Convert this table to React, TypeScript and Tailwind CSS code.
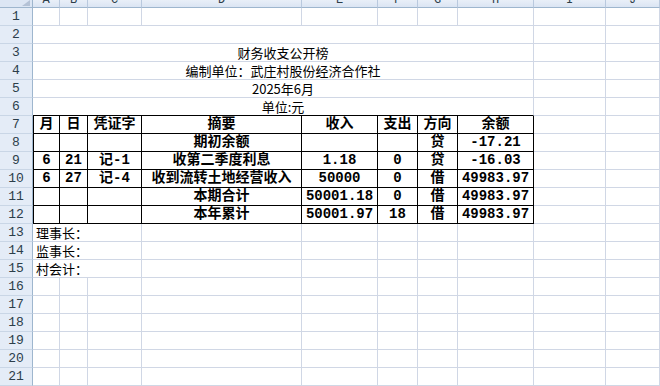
const cols = ["A", "B", "C", "D", "E", "F", "G", "H", "I", "J"];

const table = [
    ["月", "日", "凭证字", "摘要", "收入", "支出", "方向", "余额"],
    ["", "", "", "期初余额", "", "", "贷", "-17.21"],
    ["6", "21", "记-1", "收第二季度利息", "1.18", "0", "贷", "-16.03"],
    ["6", "27", "记-4", "收到流转土地经营收入", "50000", "0", "借", "49983.97"],
    ["", "", "", "本期合计", "50001.18", "0", "借", "49983.97"],
    ["", "", "", "本年累计", "50001.97", "18", "借", "49983.97"],
];

const titles: Record<number, string> = {
    2: "",
    3: "财务收支公开榜",
    4: "编制单位：武庄村股份经济合作社",
    5: "2025年6月",
    6: "单位:元",
};

const signers: Record<number, string> = {
    13: "理事长：",
    14: "监事长：",
    15: "村会计：",
};

const RowHead = ({ n }: { n: number }) => (
    <div className="h-[18px] flex items-center justify-center bg-[#e4ecf7] border-r border-r-[#9eb6ce] border-b border-b-[#c9d6e6] text-[13px] text-[#2c3e4a] font-['Liberation_Mono',monospace]">
        {n}
    </div>
);

const Empty = () => <div className="h-[18px] border-r border-b border-[#d0d7e5]" />;

const App = () => {
    const rows = Array.from({ length: 21 }, (_, i) => i + 1);
    return (
        <div className="w-[660px] h-[386px] overflow-hidden bg-white font-['Noto_Sans_CJK_SC',sans-serif] text-black">
            <div className="grid grid-cols-[33px_27px_28px_54px_160px_76px_40px_40px_76px_72px_1fr]">
                {/* column header strip, scrolled so only its lower part shows */}
                <div className="relative h-[8px] bg-[#dce6f4] border-r border-r-[#9eb6ce] border-b border-b-[#9eb6ce]">
                    <svg className="absolute right-[2px] top-0" width="10" height="6" viewBox="0 0 10 6">
                        <polygon points="10,0 10,6 2,6" fill="#b4c2d6" />
                    </svg>
                </div>
                {cols.map((c) => (
                    <div key={c} className="h-[8px] overflow-hidden flex items-end justify-center bg-gradient-to-b from-[#e9eff8] to-[#dbe5f3] border-r border-r-[#b9c9de] border-b border-b-[#9eb6ce]">
                        <span className="leading-[14px] text-[12px] text-[#2c3e4a] font-['Liberation_Mono',monospace]">{c}</span>
                    </div>
                ))}

                {rows.map((n) => {
                    const cells = [];
                    if (n >= 2 && n <= 6) {
                        cells.push(
                            <div
                                key="m"
                                className={
                                    n === 6
                                        ? "col-span-8 h-[18px] flex items-center justify-center text-[13px] border-r border-r-[#d0d7e5] border-b border-b-black"
                                        : "col-span-8 h-[18px] flex items-center justify-center text-[13px] border-r border-b border-[#d0d7e5]"
                                }
                            >
                                {titles[n]}
                            </div>
                        );
                        cells.push(<Empty key="i" />, <Empty key="j" />);
                    } else if (n >= 7 && n <= 12) {
                        table[n - 7].forEach((t, ci) => {
                            cells.push(
                                <div
                                    key={ci}
                                    className={
                                        ci === 0
                                            ? "h-[18px] flex items-center justify-center border-l border-r border-b border-black text-[14px] font-bold font-['Liberation_Mono','Noto_Sans_CJK_SC',monospace]"
                                            : "h-[18px] flex items-center justify-center border-r border-b border-black text-[14px] font-bold font-['Liberation_Mono','Noto_Sans_CJK_SC',monospace] whitespace-nowrap"
                                    }
                                >
                                    {t}
                                </div>
                            );
                        });
                        cells.push(<Empty key="i" />, <Empty key="j" />);
                    } else if (n >= 13 && n <= 15) {
                        cells.push(
                            <div key="s" className="col-span-3 h-[18px] flex items-center pl-[3px] text-[13px] border-r border-b border-[#d0d7e5]">
                                {signers[n]}
                            </div>
                        );
                        for (let k = 0; k < 7; k++) cells.push(<Empty key={k} />);
                    } else {
                        for (let k = 0; k < 10; k++) cells.push(<Empty key={k} />);
                    }
                    return [<RowHead key={"h" + n} n={n} />, ...cells.map((c, i) => <div key={n + "-" + i} className="contents">{c}</div>)];
                })}
            </div>
        </div>
    );
};

export default App;
